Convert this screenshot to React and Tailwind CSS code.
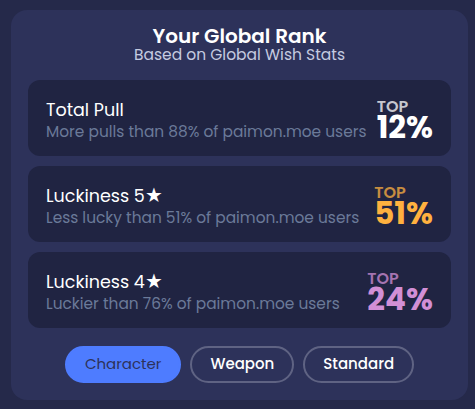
const stats = [
  {
    title: "Total Pull",
    desc: "More pulls than 88% of paimon.moe users",
    value: "12%",
    color: "text-white",
    top: "text-white/75",
  },
  {
    title: "Luckiness 5★",
    desc: "Less lucky than 51% of paimon.moe users",
    value: "51%",
    color: "text-[#ffb13f]",
    top: "text-[#ffb13f]/75",
  },
  {
    title: "Luckiness 4★",
    desc: "Luckier than 76% of paimon.moe users",
    value: "24%",
    color: "text-[#d28fd6]",
    top: "text-[#d28fd6]/75",
  },
];

const tabs = ["Character", "Weapon", "Standard"];

export default function App() {
  return (
    <div className="min-h-screen bg-[#25294a] pl-[11px] pr-[7px] pt-[10px] pb-[9px] font-['Poppins','Inter',sans-serif]">
      <div className="bg-[#2d325a] rounded-2xl px-[17px] pt-[16px] pb-[17px]">
        <div className="text-center">
          <h2 className="text-white font-semibold text-[20px] leading-[20px]">
            Your Global Rank
          </h2>
          <p className="text-[#c5cbe0] text-[15.5px] leading-[18px]">
            Based on Global Wish Stats
          </p>
        </div>

        <div className="mt-[16px] flex flex-col gap-[10px]">
          {stats.map((s) => (
            <div
              key={s.title}
              className="bg-[#202442] rounded-xl h-[76px] px-[18px] flex items-center justify-between"
            >
              <div className="pt-[8px]">
                <div className="text-white text-[17.5px] leading-[20px]">{s.title}</div>
                <div className="text-[#6b7a99] text-[15.4px] leading-[24px]">{s.desc}</div>
              </div>
              <div className="flex flex-col items-start">
                <span className={`${s.top} font-semibold text-[16px] leading-[16px]`}>TOP</span>
                <span className={`${s.color} mt-[1px] font-bold text-[31px] leading-[22px]`}>
                  {s.value}
                </span>
              </div>
            </div>
          ))}
        </div>

        <div className="mt-[18px] flex justify-center gap-[9px]">
          {tabs.map((t, i) => (
            <button
              key={t}
              className={
                i === 0
                  ? "h-[37px] px-[18px] rounded-full border-2 border-[#4e7cff] bg-[#4e7cff] text-[#2d325a] text-[15px]"
                  : "h-[37px] px-[18px] rounded-full border-2 border-[#5f6383] text-white text-[15px] font-medium"
              }
            >
              {t}
            </button>
          ))}
        </div>
      </div>
    </div>
  );
}
